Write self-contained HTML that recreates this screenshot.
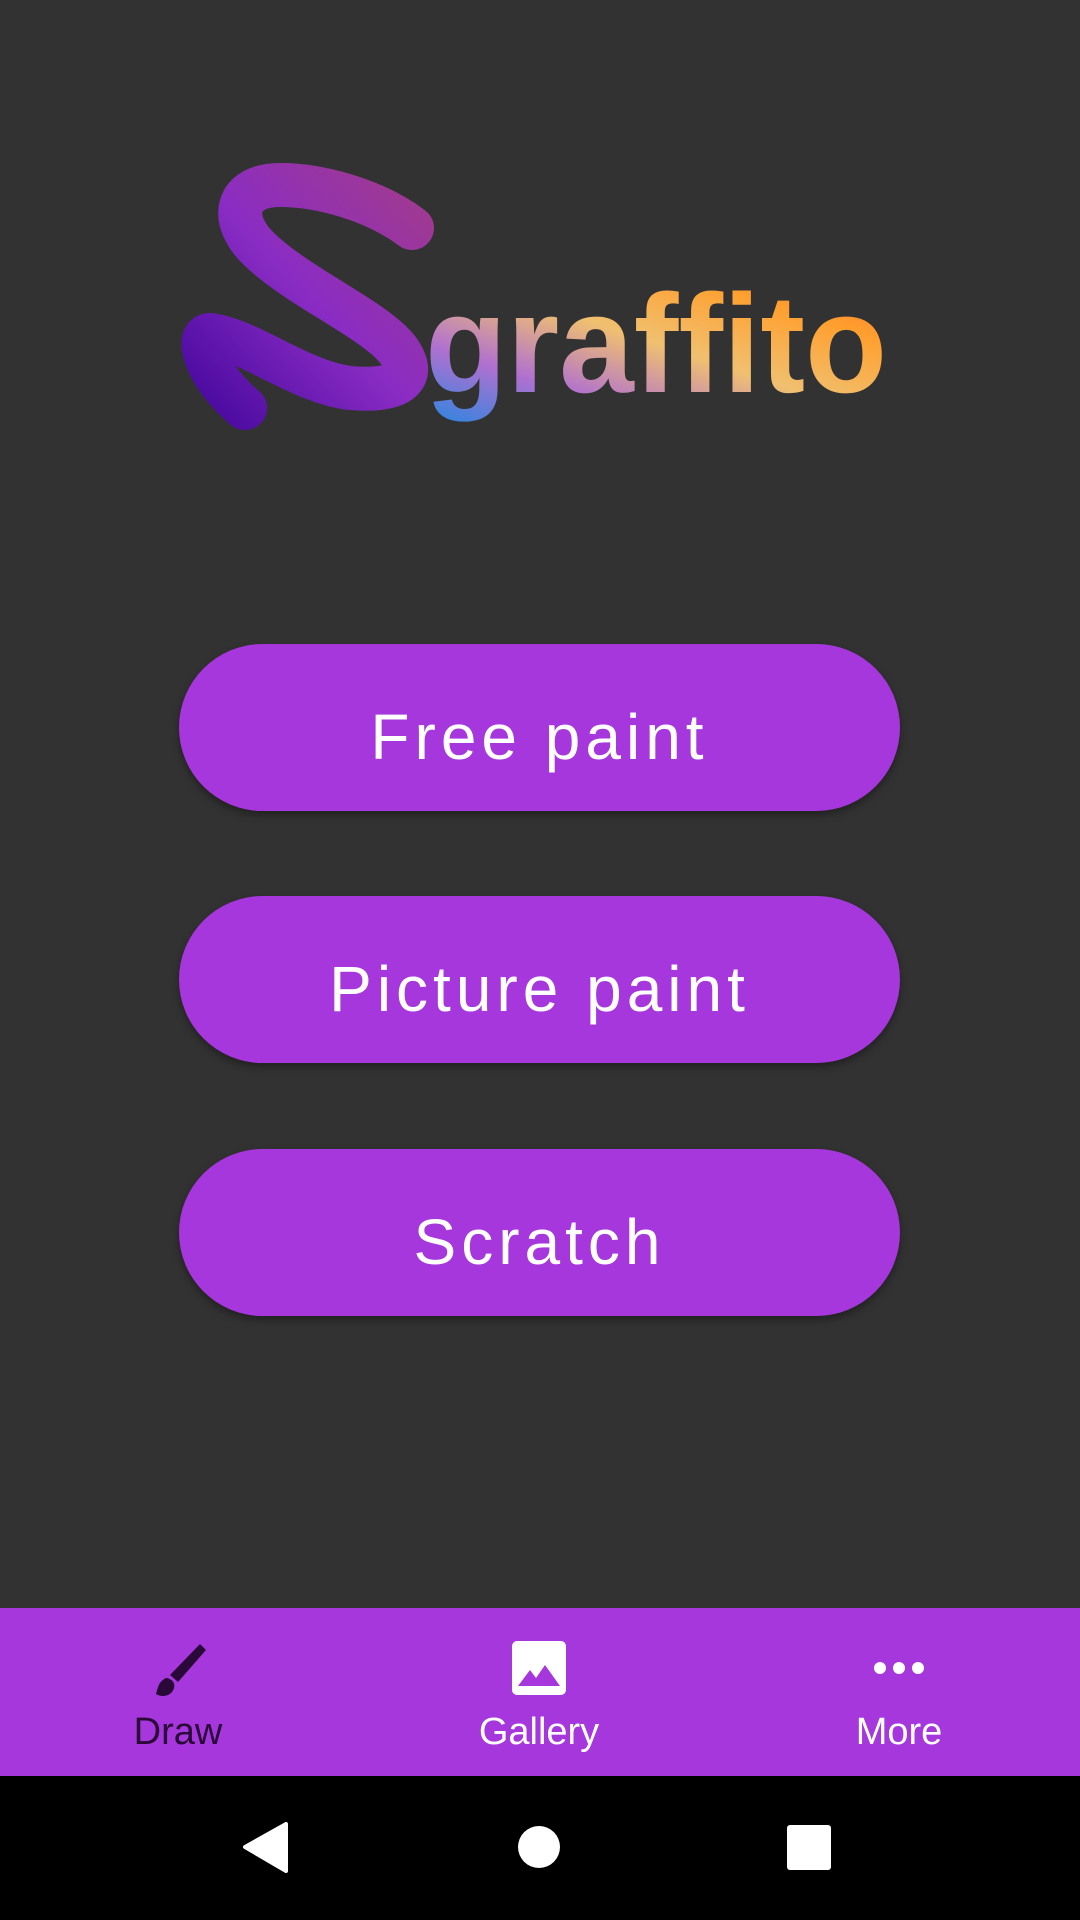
<!DOCTYPE html>
<html><head><meta charset="utf-8"><style>
html,body{margin:0;padding:0;width:1080px;height:1920px;background:#323232;overflow:hidden;font-family:"Liberation Sans",sans-serif;}
.btn{position:absolute;left:179px;width:721px;height:167px;border-radius:84px;background:#a637dc;color:#fff;font-size:64px;letter-spacing:5px;text-align:center;line-height:167px;box-shadow:0 4px 8px rgba(0,0,0,.35);}
.btn span{position:relative;top:10px;}
.nav{position:absolute;left:0;top:1608px;width:1080px;height:168px;background:#a637dc;}
.lbl{position:absolute;top:1711px;font-size:38px;text-align:center;width:300px;color:#fff;}
.sys{position:absolute;left:0;top:1776px;width:1080px;height:144px;background:#000;}
</style></head><body>
<svg style="position:absolute;left:0;top:0" width="1080" height="460">
<defs>
<linearGradient id="gs" x1="0" y1="1" x2="1" y2="0"><stop offset="0" stop-color="#4a0aa0"/><stop offset=".5" stop-color="#8a2cc4"/><stop offset="1" stop-color="#a03a90"/></linearGradient>
<linearGradient id="gt" x1="0" y1="1" x2="1" y2="0"><stop offset="0" stop-color="#2a86e0"/><stop offset=".25" stop-color="#b070d0"/><stop offset=".5" stop-color="#f0c070"/><stop offset=".75" stop-color="#ffa030"/><stop offset="1" stop-color="#ff6a20"/></linearGradient>
</defs>
<path d="M412,228 C375,200 320,185 280,185 C235,185 228,220 260,250 C300,288 375,320 398,350 C420,380 395,392 350,388 C300,382 250,340 210,335 C195,335 205,375 245,408" fill="none" stroke="url(#gs)" stroke-width="44" stroke-linecap="round"/>
<text x="425" y="392" font-family="Liberation Sans" font-weight="bold" font-size="140" fill="url(#gt)" textLength="462" lengthAdjust="spacingAndGlyphs">graffito</text>
</svg>
<div class="btn" style="top:644px"><span>Free paint</span></div>
<div class="btn" style="top:896px"><span>Picture paint</span></div>
<div class="btn" style="top:1149px"><span>Scratch</span></div>
<div class="nav"></div>
<svg style="position:absolute;left:0;top:1608px" width="1080" height="168">
<path d="M200,36 L206,42 L178,74 L170,67 Z" fill="#2a0838"/>
<path d="M166,70 C158,74 158,80 156,86 C162,90 172,88 174,80 C176,74 170,70 166,70 Z" fill="#2a0838"/>
<rect x="512" y="33" width="54" height="54" rx="5" fill="#fff"/>
<path d="M518,78 L530,62 L536,70 L545,57 L560,78 Z" fill="#a637dc"/>
<circle cx="880" cy="60" r="6" fill="#fff"/><circle cx="899" cy="60" r="6" fill="#fff"/><circle cx="918" cy="60" r="6" fill="#fff"/>
</svg>
<div class="lbl" style="left:28px;color:#2a0838">Draw</div>
<div class="lbl" style="left:389px">Gallery</div>
<div class="lbl" style="left:749px">More</div>
<div class="sys"></div>
<svg style="position:absolute;left:0;top:1776px" width="1080" height="144">
<path d="M286,48 L286,95 L245,71 Z" fill="#fff" stroke="#fff" stroke-width="4" stroke-linejoin="round"/>
<circle cx="539" cy="71" r="21" fill="#fff"/>
<rect x="787" y="49" width="44" height="45" rx="3" fill="#fff"/>
</svg>
</body></html>
